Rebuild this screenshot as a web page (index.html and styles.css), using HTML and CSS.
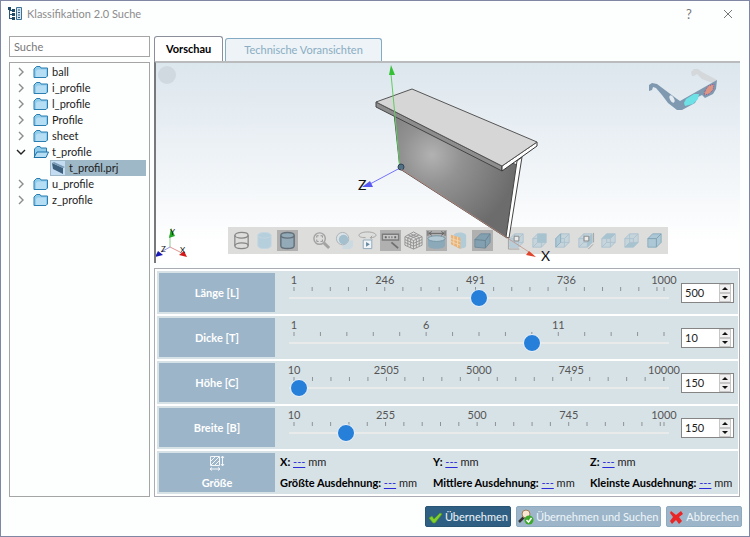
FILE: index.html
```html
<!DOCTYPE html>
<html lang="de">

<head>
    <meta charset="UTF-8">
    <title>Klassifikation 2.0 Suche</title>
    <meta name="viewport" content="width=device-width, initial-scale=1">
    <link rel="stylesheet" href="styles.css">
</head>

<body>
    <svg class="sprite" width="0" height="0" aria-hidden="true">
        <symbol id="chevron" viewBox="0 0 8 10">
            <polyline points="2 1,6 5,2 9" fill="none" stroke="currentcolor" stroke-width="1.4" />
        </symbol>
        <symbol id="folder" viewBox="0 0 16 14">
            <path d="M1 12.500V4l2.500-2.500H7L8 3h6.500v8l-1.500 1.500z" fill="#8fcbea" stroke="#2b7eb0" />
            <path d="M3 12V6l1.500-1.500H13V12z" fill="#b5def4" />
        </symbol>
        <symbol id="folder-open" viewBox="0 0 16 14">
            <path d="M1.500 12.500V4L4 1.500h3L8 3h5.500v4" fill="#8fcbea" stroke="#2b7eb0" />
            <path d="M1 12.500L4 7h11.500L13 12.500z" fill="#b5def4" stroke="#1f72a6" />
        </symbol>
        <symbol id="part" viewBox="0 0 14 14">
            <rect width="14" height="14" fill="#c3dcf1" />
            <path d="M1 2l11 5v6L2 8z" fill="#3d607f" />
            <path d="M1 2l2-1 11 5-2 1z" fill="#7899b5" />
        </symbol>
        <symbol id="cyl" viewBox="0 0 20 20">
            <path d="M3 4.500v11c0 1.700 3 3 7 3s7-1.300 7-3v-11" />
            <ellipse cx="10" cy="4.500" rx="7" ry="3" />
        </symbol>
        <symbol id="cube" viewBox="0 0 20 20">
            <path d="M3 8l5-5h9v9l-5 5H3z" fill="#c3d4dc" stroke="#a5bfce" />
            <path d="M3 8h9v9M12 8l5-5M8 3v9h9M8 12l-5 5" fill="none" stroke="#a5bfce" />
        </symbol>
    </svg>

    <div class="window">
        <header class="titlebar">
            <svg class="titlebar__icon" viewBox="0 0 14 14" width="14" height="14" aria-hidden="true">
                <path d="M1.500 0v12M1.500 3.500H4M1.500 7.500H4M1.500 11.500H4" stroke="#2b5875" fill="none" />
                <path d="M0 0h3v3H0zM4 2h3v3H4zM4 6h3v3H4zM4 10h3v3H4z" fill="#1f4a68" />
                <path d="M8.500.5h5v12h-5z" fill="#d4e5ef" stroke="#3d7295" />
                <path d="M10 3h2M10 5.500h2M10 8h2M10 10.500h2" stroke="#2b5875" />
            </svg>
            <h1 class="titlebar__title">Klassifikation 2.0 Suche</h1>
            <button class="titlebar__btn" type="button" aria-label="Hilfe">?</button>
            <button class="titlebar__btn" type="button" aria-label="Schließen">
                <svg viewBox="0 0 10 10" width="10" height="10">
                    <path d="M1 1l8 8M9 1L1 9" stroke="#777" fill="none" />
                </svg>
            </button>
        </header>

        <div class="content">
            <aside class="sidebar">
                <input class="search" type="text" placeholder="Suche" aria-label="Suche">
                <ul class="tree">
                    <li class="tree__item"><svg class="tree__arrow"><use href="#chevron" /></svg><svg class="tree__icon"><use href="#folder" /></svg>ball</li>
                    <li class="tree__item"><svg class="tree__arrow"><use href="#chevron" /></svg><svg class="tree__icon"><use href="#folder" /></svg>i_profile</li>
                    <li class="tree__item"><svg class="tree__arrow"><use href="#chevron" /></svg><svg class="tree__icon"><use href="#folder" /></svg>l_profile</li>
                    <li class="tree__item"><svg class="tree__arrow"><use href="#chevron" /></svg><svg class="tree__icon"><use href="#folder" /></svg>Profile</li>
                    <li class="tree__item"><svg class="tree__arrow"><use href="#chevron" /></svg><svg class="tree__icon"><use href="#folder" /></svg>sheet</li>
                    <li class="tree__item"><svg class="tree__arrow tree__arrow--open"><use href="#chevron" /></svg><svg class="tree__icon"><use href="#folder-open" /></svg>t_profile</li>
                    <li class="tree__item tree__item--selected"><svg class="tree__icon"><use href="#part" /></svg>t_profil.prj</li>
                    <li class="tree__item"><svg class="tree__arrow"><use href="#chevron" /></svg><svg class="tree__icon"><use href="#folder" /></svg>u_profile</li>
                    <li class="tree__item"><svg class="tree__arrow"><use href="#chevron" /></svg><svg class="tree__icon"><use href="#folder" /></svg>z_profile</li>
                </ul>
            </aside>

            <main class="main">
                <div class="tabs" role="tablist">
                    <button class="tab tab--active" type="button" role="tab" aria-selected="true">Vorschau</button>
                    <button class="tab" type="button" role="tab" aria-selected="false">Technische Voransichten</button>
                </div>

                <div class="preview">
                    <div class="toolbar">
                        <div class="toolbar__group">
                            <button class="tool" type="button" aria-label="Drahtmodell"><svg viewBox="0 0 20 20" fill="none" stroke="#777" stroke-width="1.300"><use href="#cyl" /><path d="M3 15.500c0-1.700 3-3 7-3s7 1.300 7 3" /></svg></button>
                            <button class="tool" type="button" aria-label="Schattiert"><svg viewBox="0 0 20 20" fill="#b0cddd" stroke="#bed5e1"><use href="#cyl" /></svg></button>
                            <button class="tool tool--active" type="button" aria-label="Schattiert mit Kanten"><svg viewBox="0 0 20 20" fill="#8eabba" stroke="#566670" stroke-width="1.500"><use href="#cyl" /></svg></button>
                        </div>
                        <div class="toolbar__group">
                            <button class="tool" type="button" aria-label="Einpassen"><svg viewBox="0 0 20 20" fill="none" stroke="#999"><circle cx="8" cy="8" r="6" stroke-width="1.500" /><path d="M5 7V5h2M9 5h2v2M11 9v2H9M7 11H5V9" stroke="#888" /><path d="M12.500 12.500L18 18" stroke-width="3" /></svg></button>
                            <button class="tool" type="button" aria-label="Transparenz"><svg viewBox="0 0 20 20"><path d="M10 10h9v6l-3 3h-8v-6z" fill="#c8dae3" /><circle cx="8" cy="8" r="6.500" fill="#dce5ea" stroke="#a4acb1" /><circle cx="9" cy="9" r="5" fill="#9bbccd" /></svg></button>
                            <button class="tool" type="button" aria-label="Animation"><svg viewBox="0 0 20 20"><path d="M8 7C3 7 1 6 1 4.500S4 1 10 1s9 2 9 3.500S16 7 13 7l2-2M13 7l2 2" fill="none" stroke="#999" /><path d="M5.500 9.500h9v9h-9z" fill="#f6fafc" stroke="#82a1b5" /><path d="M8.500 11.500l4 2.500-4 2.500z" fill="#527e9b" /></svg></button>
                            <button class="tool tool--active" type="button" aria-label="Messen"><svg viewBox="0 0 20 20"><path d="M1.500 3.500h17v6h-17z" fill="#ccc" stroke="#737373" stroke-width="1.500" /><path d="M4 6.500h2M8 6.500h1M11 6.500h1M14 6.500h2" stroke="#555" stroke-width="2" /><path d="M11 12l7 6" stroke="#666" stroke-width="2" /></svg></button>
                            <button class="tool" type="button" aria-label="Netz"><svg viewBox="0 0 20 20" fill="none" stroke="#888"><path d="M1 6l9-5 9 5v9l-9 4-9-4zM1 6l9 4 9-4M10 10v9M1 9l9 4 9-4M1 12l9 4 9-4M4 4l9 4v10M7 3l9 4v9M16 4L7 8v10M13 3L4 7v9" /></svg></button>
                            <button class="tool tool--active" type="button" aria-label="Bemaßung"><svg viewBox="0 0 20 20"><path d="M1 8v7c0 5 18 5 18 0V8" fill="#85a8ba" /><ellipse cx="10" cy="8" rx="9" ry="3" fill="#b4cedb" stroke="#6e92a5" /><path d="M1 0v5M19 0v5M2 2.500h16M5 .5l-3 2 3 2M15 .5l3 2-3 2" fill="none" stroke="#555" /></svg></button>
                            <button class="tool" type="button" aria-label="Schnitt"><svg viewBox="0 0 20 20"><path d="M4 4c3-4 13-3 13 1v10c0 3-5 4-9 3z" fill="#aac8d7" /><path d="M1 4l10 3v12L1 14z" fill="#ecac66" /><path d="M1 8l10 3M1 11l10 4M4 5v10M8 6v11" stroke="#f5d5a9" /></svg></button>
                            <button class="tool tool--active" type="button" aria-label="Perspektive"><svg viewBox="0 0 20 20"><path d="M2 9l6-6h10v9l-5 6-11-1z" fill="#7c9eb1" stroke="#668599" /><path d="M2 9l11 1 5-7M13 10v8" fill="none" stroke="#5d7b8e" /></svg></button>
                        </div>
                        <div class="toolbar__group">
                            <button class="tool" type="button" aria-label="Vorderansicht"><svg viewBox="0 0 20 20"><use href="#cube" /><path d="M3 8h9v9H3z" fill="#b2cbd7" /><path d="M7.500 5.500h5v5h-5z" fill="#eee" stroke="#777" /><path d="M1.500 8v11H13" fill="none" stroke="#999" /></svg></button>
                            <button class="tool" type="button" aria-label="Rückansicht"><svg viewBox="0 0 20 20"><use href="#cube" /><path d="M8 3h9v9H8z" fill="#9fbfcf" /></svg></button>
                            <button class="tool" type="button" aria-label="Ansicht links"><svg viewBox="0 0 20 20"><use href="#cube" /><path d="M3 8l5-5v9l-5 5z" fill="#a7c6d5" stroke="#80a8bd" /></svg></button>
                            <button class="tool" type="button" aria-label="Ansicht rechts"><svg viewBox="0 0 20 20"><use href="#cube" /><path d="M12 8l5-5v9l-5 5z" fill="#9fbfcf" /><path d="M8.500 5.500h5v5h-5z" fill="#eee" stroke="#777" /><path d="M18.500 2v10M18 14l-5 5" stroke="#999" /></svg></button>
                            <button class="tool" type="button" aria-label="Draufsicht"><svg viewBox="0 0 20 20"><use href="#cube" /><path d="M3 8l5-5h9l-5 5z" fill="#9fbfcf" /></svg></button>
                            <button class="tool" type="button" aria-label="Ansicht unten"><svg viewBox="0 0 20 20"><use href="#cube" /><path d="M3 17l5-5h9l-5 5z" fill="#9fbfcf" /></svg></button>
                            <button class="tool" type="button" aria-label="Isometrie"><svg viewBox="0 0 20 20"><path d="M3 8l5-5h9v9l-5 5H3z" fill="#a4c4d4" stroke="#7da5b9" /><path d="M3 8h9v9M12 8l5-5" fill="none" stroke="#7398ac" /></svg></button>
                        </div>
                    </div>

                    <svg class="scene" viewBox="156 63 584 200" role="img" aria-label="T-Profil">
                        <defs>
                            <radialGradient id="web" gradientUnits="userSpaceOnUse" cx="432" cy="155" r="85">
                                <stop offset="0" stop-color="#b2b2b2" />
                                <stop offset="0.350" stop-color="#929292" />
                                <stop offset="1" stop-color="#6c6c6c" />
                            </radialGradient>
                        </defs>
                        <circle cx="167" cy="75" r="9" fill="#d0d9e0" />

                        <!-- profile -->
                        <path d="M394 113L517 165 507 238 400 169z" fill="url(#web)" stroke="#555" />
                        <path d="M517 161l5-4-13 81-3-1z" fill="#fff" stroke="#444" />
                        <path d="M376 102L502 166v5L376 107z" fill="#8d8d8d" stroke="#444" />
                        <path d="M502 166l35-24v4l-35 25z" fill="#fff" stroke="#333" />
                        <path d="M376 102l36-13 125 53-35 24z" fill="#d6d6d6" stroke="#555" />

                        <!-- axes -->
                        <path d="M400 168L391 74" stroke="#62cc62" />
                        <path d="M391 65l4 10h-6z" fill="#35c135" />
                        <path d="M400 168l-30 16" stroke="#7373ff" />
                        <path d="M362 187l8-6 3 6z" fill="#5757f2" />
                        <circle cx="401" cy="167" r="3" fill="#4e7186" stroke="#345" />
                        <path d="M401 169l128 83" stroke="#c18a7d" stroke-width="0.700" />
                        <path d="M536 257l-10-2 3-4z" fill="#df442c" />
                        <text x="358" y="190" class="scene__axis">Z</text>
                        <text x="541" y="261" class="scene__axis">X</text>

                        <!-- orientation triad -->
                        <path d="M170 247v-12" stroke="#8dcb8d" />
                        <path d="M170 247l-9 5" stroke="#9595dd" />
                        <path d="M170 247l10 5" stroke="#dd9595" />
                        <path d="M171 228l4 8-6 2z" fill="#25a825" />
                        <path d="M155 257l3-6 5 4z" fill="#1818b4" />
                        <path d="M187 257l-3-6-5 4z" fill="#d21818" />
                        <text x="170" y="235" class="scene__axis scene__axis--small">Y</text>
                        <text x="161" y="252" class="scene__axis scene__axis--small">Z</text>
                        <text x="180" y="253" class="scene__axis scene__axis--small">X</text>

                        <!-- anaglyph glasses -->
                        <path d="M692 76L691 72 694 69H698L702 72 717 80 715 84 702 79 697 74 694 76z" fill="#d5d8da" />
                        <path d="M649 91V85L652 83 657 84 677 99 680 101 717 80 716 89 713 94 705 98 702 95 698 97 695 103 682 110H677L668 103 662 95 656 88 653 87 652 90z" fill="#7f99b1" />
                        <ellipse cx="672" cy="99" rx="2" ry="4" fill="#e4ebf0" transform="rotate(-28 672 99)" />
                        <path d="M684 103L686 99 694 94H699L698 99 693 104 685 106z" fill="#6de1e5" />
                        <path d="M705 91L708 86 714 84 713 90 709 94 704 95z" fill="#dd9483" stroke="#8166a4" stroke-dasharray="1 1" />
                    </svg>
                </div>

                <div class="params">
                    <div class="param">
                        <label class="param__label" for="laenge">Länge [L]</label>
                        <div class="slider">
                            <svg class="slider__scale" data-min="1" data-max="1000" data-step="49"></svg>
                            <input class="slider__range" type="range" min="1" max="1000" value="500" aria-label="Länge [L]">
                        </div>
                        <div class="spin">
                            <input class="spin__input" id="laenge" type="text" inputmode="numeric" value="500">
                            <button class="spin__btn spin__btn--up" type="button" aria-label="Erhöhen"></button>
                            <button class="spin__btn spin__btn--down" type="button" aria-label="Verringern"></button>
                        </div>
                    </div>
                    <div class="param">
                        <label class="param__label" for="dicke">Dicke [T]</label>
                        <div class="slider">
                            <svg class="slider__scale" data-min="1" data-max="15" data-step="1"></svg>
                            <input class="slider__range" type="range" min="1" max="15" value="10" aria-label="Dicke [T]">
                        </div>
                        <div class="spin">
                            <input class="spin__input" id="dicke" type="text" inputmode="numeric" value="10">
                            <button class="spin__btn spin__btn--up" type="button" aria-label="Erhöhen"></button>
                            <button class="spin__btn spin__btn--down" type="button" aria-label="Verringern"></button>
                        </div>
                    </div>
                    <div class="param">
                        <label class="param__label" for="hoehe">Höhe [C]</label>
                        <div class="slider">
                            <svg class="slider__scale" data-min="10" data-max="10000" data-step="499"></svg>
                            <input class="slider__range" type="range" min="10" max="10000" value="150" aria-label="Höhe [C]">
                        </div>
                        <div class="spin">
                            <input class="spin__input" id="hoehe" type="text" inputmode="numeric" value="150">
                            <button class="spin__btn spin__btn--up" type="button" aria-label="Erhöhen"></button>
                            <button class="spin__btn spin__btn--down" type="button" aria-label="Verringern"></button>
                        </div>
                    </div>
                    <div class="param">
                        <label class="param__label" for="breite">Breite [B]</label>
                        <div class="slider">
                            <svg class="slider__scale" data-min="10" data-max="1000" data-step="49"></svg>
                            <input class="slider__range" type="range" min="10" max="1000" value="150" aria-label="Breite [B]">
                        </div>
                        <div class="spin">
                            <input class="spin__input" id="breite" type="text" inputmode="numeric" value="150">
                            <button class="spin__btn spin__btn--up" type="button" aria-label="Erhöhen"></button>
                            <button class="spin__btn spin__btn--down" type="button" aria-label="Verringern"></button>
                        </div>
                    </div>
                    <div class="param param--size">
                        <div class="param__label param__label--size">
                            <svg viewBox="0 0 16 16" width="16" height="16" fill="none" stroke="#f2f6f9" aria-hidden="true">
                                <path d="M1.500 1.500h9v9h-9zM2 6l4-4M2 10l8-8M6 10l4-4M13.500 1v10M12 3l1.500-2L15 3M12 9l1.500 2L15 9M1 14h10M3 12.500L1 14l2 1.500M9 12.500l2 1.500-2 1.500" />
                            </svg>
                            Größe
                        </div>
                        <div class="sizes">
                            <span><b>X:</b> <a href="#x">---</a> mm</span>
                            <span><b>Y:</b> <a href="#y">---</a> mm</span>
                            <span><b>Z:</b> <a href="#z">---</a> mm</span>
                            <span><b>Größte Ausdehnung:</b> <a href="#max">---</a> mm</span>
                            <span><b>Mittlere Ausdehnung:</b> <a href="#mid">---</a> mm</span>
                            <span><b>Kleinste Ausdehnung:</b> <a href="#min">---</a> mm</span>
                        </div>
                    </div>
                </div>
            </main>
        </div>

        <footer class="footer">
            <button class="btn btn--primary" type="button">
                <svg viewBox="0 0 16 16" width="16" height="16"><path d="M2 9l3-2 2 3 6-6 2 1-7 9H6z" fill="#83cf2d" stroke="#4d9a25" stroke-width="0.700" /></svg>
                Übernehmen
            </button>
            <button class="btn" type="button">
                <svg viewBox="0 0 16 16" width="16" height="16"><path d="M1 13l5-5" stroke="#333" stroke-width="2.500" /><circle cx="8" cy="5" r="4" fill="#f5e7d3" stroke="#a27c57" /><circle cx="11" cy="11" r="4.500" fill="#3da92c" /><path d="M8.500 11l2 2 3-4" fill="none" stroke="#fff" stroke-width="1.500" /></svg>
                Übernehmen und Suchen
            </button>
            <button class="btn" type="button">
                <svg viewBox="0 0 16 16" width="16" height="16"><path d="M3 2l5 4 5-4 2 3-4 3 3 4-3 3-3-4-4 4-2-3 3-4-3-4z" fill="#ea2525" /></svg>
                Abbrechen
            </button>
        </footer>
    </div>
    <script src="scale.js"></script>
</body>

</html>
```

FILE: styles.css
```css
* {
    box-sizing: border-box;
    margin: 0;
    padding: 0;
}

:root {
    --text: #1c1c1c;
    --muted: #8c8c8c;
    --accent: #9cb5c9;
    --accent-dark: #2f6083;
    --panel: #d7e2e7;
    --thumb: #267fd8;
}

body,
button,
input {
    color: var(--text);
    font: 11px/16px Lato, "Open Sans", sans-serif;
}

.sprite {
    position: absolute;
}

.window {
    background: #fdfefe;
    border: 1px solid #7f87a5;
    display: flex;
    flex-direction: column;
    min-height: 100vh;
}

/* Title bar */
.titlebar {
    align-items: center;
    display: flex;
    height: 25px;
    padding: 0 6px 0 7px;
}

.titlebar__title {
    color: var(--muted);
    flex: 1;
    font-size: 11px;
    font-weight: 400;
    padding-left: 5px;
}

.titlebar__btn {
    background: none;
    border: 0;
    color: #777;
    font-size: 13px;
    width: 30px;
}

.titlebar__btn + .titlebar__btn {
    margin-left: 9px;
}

.content {
    display: grid;
    flex: 1;
    gap: 4px;
    grid-template-columns: 141px minmax(0, 1fr);
    padding: 10px 9px 0 8px;
}

/* Sidebar */
.sidebar {
    display: flex;
    flex-direction: column;
    gap: 5px;
}

.search {
    border: 1px solid #a5a5a5;
    height: 21px;
    padding: 0 4px;
    width: 100%;
}

.search::placeholder {
    color: #777;
}

.tree {
    border: 1px solid #a5a5a5;
    flex: 1;
    list-style: none;
    padding: 1px 3px 1px 7px;
}

.tree__item {
    align-items: center;
    display: flex;
    height: 16px;
}

.tree__item--selected {
    background: #9fb8c7;
    margin-left: 33px;
}

.tree__arrow {
    color: #8d8d8d;
    height: 10px;
    margin-right: 8px;
    width: 8px;
}

.tree__arrow--open {
    color: #222;
    transform: rotate(90deg);
}

.tree__icon {
    height: 14px;
    margin-right: 3px;
    width: 16px;
}

/* Tabs */
.main {
    display: flex;
    flex-direction: column;
    min-width: 0;
}

.tabs {
    align-items: flex-end;
    display: flex;
    gap: 2px;
    height: 25px;
}

.tab {
    background: #edf3f6;
    border: 1px solid #83abc4;
    border-bottom: 0;
    border-radius: 3px 3px 0 0;
    color: #8aadc4;
    height: 23px;
    padding: 0 18px;
}

.tab--active {
    background: #fff;
    border-color: #8b8f9c;
    color: #000;
    font-weight: 700;
    height: 25px;
    padding: 0 11px;
}

/* Preview */
.preview {
    background: linear-gradient(#dce6ed, #edf2f6 45%, #fff 90%);
    border-left: 2px solid #77797d;
    border-top: 2px solid #b9bbbd;
    height: 202px;
    position: relative;
}

.scene {
    display: block;
    height: 100%;
    pointer-events: none;
    position: relative;
    width: 100%;
}

.scene__axis {
    fill: #111;
    font-size: 14px;
}

.scene__axis--small {
    font-size: 8px;
}

.toolbar {
    background: #dddddc;
    bottom: 9px;
    display: flex;
    gap: 13px;
    left: 50%;
    padding: 3px;
    position: absolute;
    transform: translateX(-50%);
}

.toolbar__group {
    display: flex;
    gap: 2px;
}

.tool {
    background: none;
    border: 0;
    height: 21px;
    padding: 1px;
    width: 21px;
}

.tool svg {
    display: block;
    height: 19px;
    opacity: 0.85;
    width: 19px;
}

.tool--active {
    background: #b0b0b0;
}

/* Parameters */
.params {
    background: #fff;
    border: 1px solid #a9adb3;
    display: grid;
    gap: 2px;
    grid-template-columns: minmax(0, 1fr);
    margin-top: 5px;
    padding: 2px 1px 2px 2px;
}

.param {
    align-items: center;
    background: var(--panel);
    display: grid;
    grid-template-columns: 116px 1fr 53px;
    height: 43px;
    padding: 2px 4px 2px 2px;
}

.param--size {
    grid-template-columns: 116px 1fr;
}

.param__label {
    align-items: center;
    background: var(--accent);
    color: #fff;
    display: flex;
    flex-direction: column;
    font-weight: 700;
    height: 100%;
    justify-content: center;
}

.param__label--size {
    gap: 4px;
}

.slider {
    display: flex;
    flex-direction: column;
    height: 100%;
    margin: 0 8px 0 10px;
}

.slider__scale {
    fill: #555;
    height: 16px;
    margin: 0 9px;
    overflow: visible;
    stroke: none;
    width: calc(100% - 18px);
}

.slider__scale line {
    stroke: #8d9296;
}

.slider__range {
    -webkit-appearance: none;
    appearance: none;
    background: linear-gradient(#e9ebeb, #e9ebeb) center / calc(100% - 8px) 2px no-repeat;
    height: 18px;
    width: 100%;
}

.slider__range::-webkit-slider-thumb {
    -webkit-appearance: none;
    appearance: none;
    background: var(--thumb);
    border: 1px solid #eef4fa;
    border-radius: 50%;
    height: 18px;
    width: 18px;
}

.spin {
    background: #fff;
    border: 1px solid #858585;
    display: grid;
    grid-template-columns: 1fr 12px;
    grid-template-rows: 9px 9px;
    padding-right: 2px;
}

.spin__input {
    border: 0;
    grid-row: span 2;
    min-width: 0;
    padding-left: 3px;
}

.spin__btn {
    align-items: center;
    background: #f0f0f0;
    border: 1px solid #c6c6c6;
    display: flex;
    justify-content: center;
}

.spin__btn::before {
    border: 3px solid transparent;
    content: "";
}

.spin__btn--up::before {
    border-bottom-color: #111;
    border-top: 0;
}

.spin__btn--down::before {
    border-bottom: 0;
    border-top-color: #111;
}

.sizes {
    display: grid;
    gap: 5px 0;
    grid-template-columns: 153fr 157fr 144fr;
    padding-left: 5px;
    white-space: nowrap;
}

.sizes b {
    color: #000;
}

.sizes a {
    color: #2a2ad8;
}

/* Footer */
.footer {
    display: flex;
    gap: 5px;
    justify-content: flex-end;
    padding: 9px 7px;
}

.btn {
    align-items: center;
    background: var(--accent);
    border: 1px solid #8fabc0;
    border-radius: 2px;
    color: #eff5f9;
    display: flex;
    gap: 2px;
    height: 21px;
    padding: 0 2px 0 1px;
}

.btn--primary {
    background: var(--accent-dark);
    border-color: #285574;
}
```

FILE: scale.js
```js
// Draws the ticks of each slider, with a number at every fifth one and at the end.
const NS = 'http://www.w3.org/2000/svg';

function add(svg, name, attrs, text) {
    const el = document.createElementNS(NS, name);
    for (const key in attrs) el.setAttribute(key, attrs[key]);
    if (text !== undefined) el.textContent = text;
    svg.appendChild(el);
}

document.querySelectorAll('.slider__scale').forEach((svg) => {
    const min = Number(svg.dataset.min);
    const max = Number(svg.dataset.max);
    const step = Number(svg.dataset.step);
    const pos = (v) => ((v - min) / (max - min)) * 100 + '%';

    const tick = (v) => add(svg, 'line', { x1: pos(v), x2: pos(v), y1: 14, y2: 18 });
    const label = (v) => add(svg, 'text', { x: pos(v), y: 11, 'text-anchor': 'middle' }, v);

    for (let v = min, i = 0; v < max; v += step, i++) {
        tick(v);
        // the number next to the end would run into the last one
        if (i % 5 === 0 && max - v > step * 2) label(v);
    }
    tick(max);
    if (max > 100) label(max);
});
```
